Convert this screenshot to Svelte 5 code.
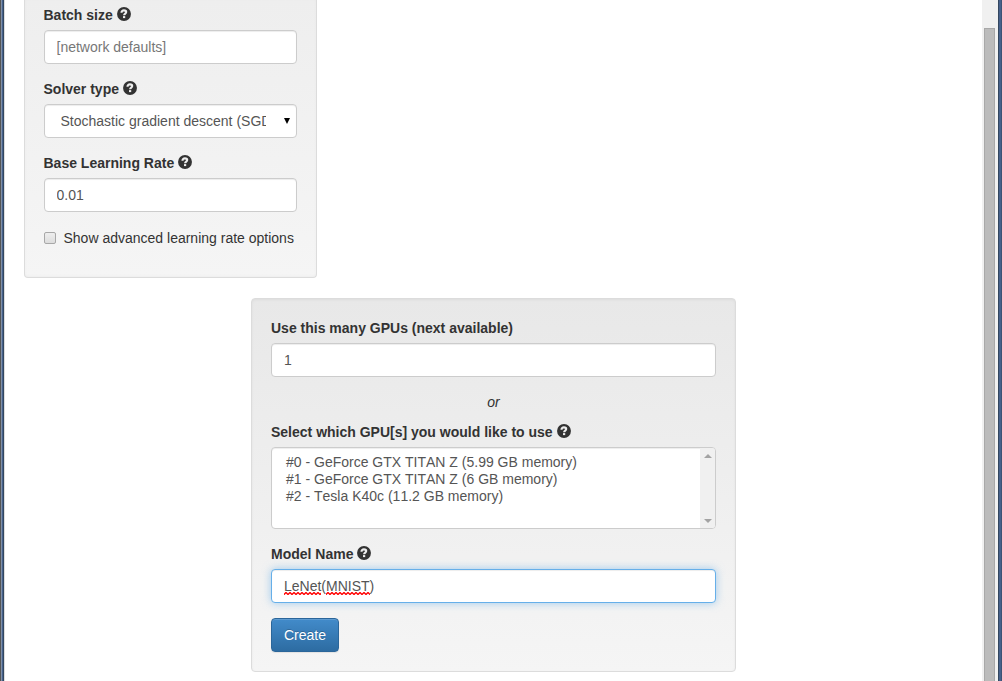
<script>
  const gpus = [
    '#0 - GeForce GTX TITAN Z (5.99 GB memory)',
    '#1 - GeForce GTX TITAN Z (6 GB memory)',
    '#2 - Tesla K40c (11.2 GB memory)'
  ];
</script>

{#snippet help()}
  <svg class="help" width="14" height="14" viewBox="0 0 14 14" aria-hidden="true">
    <circle cx="7" cy="7" r="6.95" fill="#333" />
    <path d="M4.5 5.7C4.5 4.1 5.4 3.4 6.95 3.4C8.4 3.4 9.2 4 9.2 5.1C9.2 6.6 7.1 6.5 7.1 8.3" fill="none" stroke="#eee" stroke-width="2.1" />
    <rect x="6" y="9.1" width="2.2" height="2" fill="#eee" />
  </svg>
{/snippet}

<div class="window">
  <div class="edge left"></div>
  <main>
    <section class="well solver">
      <label for="batch">Batch size {@render help()}</label>
      <input id="batch" class="control" placeholder="[network defaults]" />
      <div class="label">Solver type {@render help()}</div>
      <div class="control select">
        <span>Stochastic gradient descent (SGD)</span>
        <svg width="6" height="6" viewBox="0 0 6 6"><path d="M0 0H6L3 6Z" fill="#000" /></svg>
      </div>
      <label for="rate">Base Learning Rate {@render help()}</label>
      <input id="rate" class="control" value="0.01" />
      <div class="check"><i></i><span>Show advanced learning rate options</span></div>
    </section>

    <section class="well submit">
      <label for="count">Use this many GPUs (next available)</label>
      <input id="count" class="control" value="1" />
      <div class="or">or</div>
      <div class="label">Select which GPU[s] you would like to use {@render help()}</div>
      <div class="control list">
        <div class="options">
          {#each gpus as gpu}<div>{gpu}</div>{/each}
        </div>
        <div class="listbar">
          <svg width="8" height="4" viewBox="0 0 8 4"><path d="M0 4L4 0L8 4Z" fill="#a3a3a3" /></svg>
          <svg width="8" height="4" viewBox="0 0 8 4"><path d="M0 0L4 4L8 0Z" fill="#a3a3a3" /></svg>
        </div>
      </div>
      <div class="label">Model Name {@render help()}</div>
      <div class="control focus"><span class="misspelt">LeNet</span>(<span class="misspelt">MNIST</span>)</div>
      <button>Create</button>
    </section>
  </main>
  <div class="scrollbar"><div class="thumb"></div></div>
  <div class="edge right"></div>
</div>

<style>
  :global(body) { margin: 0; background: #fff; }
  .window {
    display: flex;
    height: 681px;
    overflow: hidden;
    font: 14px/20px "Liberation Sans", Arial, sans-serif;
    color: #333;
  }
  .window * { box-sizing: border-box; }
  .edge { flex: none; }
  .left {
    width: 5px;
    background: linear-gradient(90deg, #555 1px, #7f90a8 1px 2px, #46618b 2px 3px, #33475f 3px 4px, #dedede 4px);
  }
  .right {
    width: 4px;
    background: linear-gradient(90deg, #33475f 1px, #46618b 1px 3px, #3c5375 3px);
  }
  main { flex: 1; padding-left: 19px; }
  .well {
    border: 1px solid #dcdcdc;
    border-radius: 4px;
    padding: 19px;
    background: linear-gradient(#e8e8e8, #f5f5f5);
    box-shadow: inset 0 1px 3px rgba(0, 0, 0, .05);
  }
  .solver {
    width: 293px;
    height: 278px;
    margin-left: -.5px;
    padding-top: 5px;
    border-top: 0;
    border-radius: 0 0 4px 4px;
    background: linear-gradient(#eee, #f5f5f5);
    box-shadow: inset 0 -1px 3px rgba(0, 0, 0, .03);
  }
  .submit { width: 485px; height: 374px; margin: 20px 0 0 227px; }
  label, .label {
    display: flex;
    gap: 4px;
    height: 20px;
    margin-bottom: 5px;
    font-weight: bold;
  }
  .help { margin-top: 2px; flex: none; }
  .control {
    display: block;
    width: 100%;
    height: 34px;
    margin: 0 0 15px;
    padding: 6px 12px;
    border: 1px solid #ccc;
    border-radius: 4px;
    outline: 0;
    background: #fff;
    box-shadow: inset 0 1px 1px rgba(0, 0, 0, .075);
    font: inherit;
    color: #555;
  }
  .control::placeholder { color: #777; opacity: 1; }
  .select {
    display: flex;
    align-items: center;
    justify-content: space-between;
    padding: 6px 6px 6px 16px;
  }
  .select span { width: 205px; overflow: hidden; white-space: nowrap; }
  .check { display: flex; gap: 7px; padding-top: 1px; }
  .check i {
    width: 12px;
    height: 12px;
    margin: 4px 1px 0 0;
    border: 1px solid #a8a8a8;
    border-radius: 2px;
    background: linear-gradient(#eee, #ddd);
  }
  .or { margin-bottom: 10px; text-align: center; font-style: italic; }
  .list { display: flex; height: 82px; padding: 0; overflow: hidden; }
  .options { flex: 1; padding: 6px 14px; line-height: 17px; font-kerning: none; }
  .listbar {
    display: flex;
    flex-direction: column;
    justify-content: space-between;
    align-items: center;
    width: 15px;
    padding: 6px 0 5px;
    background: #f0f0f0;
  }
  .focus {
    border-color: #66afe9;
    box-shadow: inset 0 1px 1px rgba(0, 0, 0, .075), 0 0 8px rgba(102, 175, 233, .6);
  }
  .misspelt {
    padding-bottom: 1px;
    background: url("data:image/svg+xml,%3Csvg xmlns='http://www.w3.org/2000/svg' width='4' height='3'%3E%3Cpath d='M-1 1.5L0 2.5L2 .5L4 2.5L5 1.5' fill='none' stroke='red' stroke-width='1.4'/%3E%3C/svg%3E") 0 100% repeat-x;
  }
  button {
    display: block;
    width: 68px;
    height: 34px;
    padding: 0;
    border: 1px solid #2b669a;
    border-radius: 4px;
    background: linear-gradient(#428bca, #2d6ca2);
    box-shadow: inset 0 1px 0 rgba(255, 255, 255, .15), 0 1px 1px rgba(0, 0, 0, .075);
    font: inherit;
    color: #fff;
    text-shadow: 0 -1px 0 rgba(0, 0, 0, .2);
  }
  .scrollbar { flex: none; width: 16px; padding: 28px 3px 0 2px; background: #f0f0f0; }
  .thumb { height: 660px; border: 1px solid #a8a8a8; background: #bbb; }
</style>
